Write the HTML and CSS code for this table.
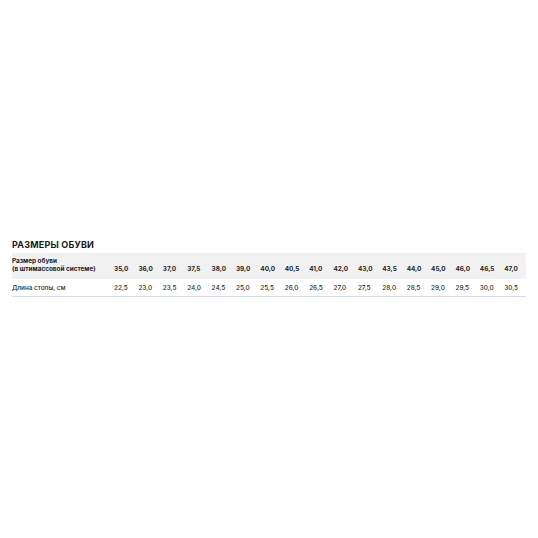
FILE: index.html
```html
<!DOCTYPE html>
<html lang="ru">
<head>
<meta charset="utf-8">
<link rel="stylesheet" href="styles.css">
</head>
<body>
<div class="page">
  <h2 class="title">РАЗМЕРЫ ОБУВИ</h2>
  <div class="table">
    <div class="row head">
      <div class="label">Размер обуви<br>(в штимассовой системе)</div>
      <div>35,0</div><div>36,0</div><div>37,0</div><div>37,5</div><div>38,0</div><div>39,0</div><div>40,0</div><div>40,5</div><div>41,0</div><div>42,0</div><div>43,0</div><div>43,5</div><div>44,0</div><div>45,0</div><div>46,0</div><div>46,5</div><div>47,0</div>
    </div>
    <div class="row body">
      <div class="label">Длина стопы, см</div>
      <div>22,5</div><div>23,0</div><div>23,5</div><div>24,0</div><div>24,5</div><div>25,0</div><div>25,5</div><div>26,0</div><div>26,5</div><div>27,0</div><div>27,5</div><div>28,0</div><div>28,5</div><div>29,0</div><div>29,5</div><div>30,0</div><div>30,5</div>
    </div>
  </div>
</div>
</body>
</html>
```
FILE: styles.css
```css
html, body { margin: 0; padding: 0; background: #fff; }
body { font-family: Inter, "Noto Sans", "Liberation Sans", sans-serif; color: #1f1f1f; }
.page { padding: 239px 12px 0 12px; }
.title { margin: 0 0 3px 0; font-size: 9px; font-weight: 700; line-height: 11px; letter-spacing: 0.2px; color: #1b1b1b; }
.table { width: 514px; }
.row {
  display: grid;
  grid-template-columns: 102px repeat(16, 24.4px) 21.6px;
  font-size: 6.4px;
}
.head { background: #f1f1f2; height: 26px; align-items: end; padding-bottom: 6px; box-sizing: border-box; font-weight: 700; line-height: 7.5px; }
.body { height: 17px; align-items: center; border-bottom: 1px solid #d8dbe9; font-weight: 500; color: #2a2a2a; }
```
